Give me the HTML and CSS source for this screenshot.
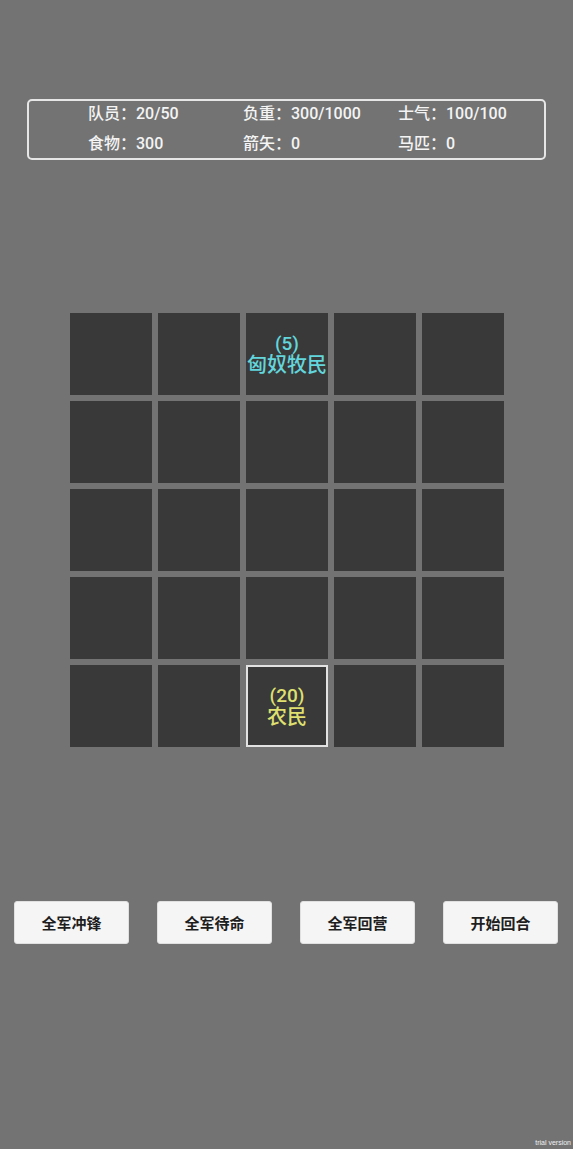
FILE: index.html
```html
<!DOCTYPE html>
<html lang="zh">
<head>
<meta charset="utf-8">
<link rel="stylesheet" href="styles.css">
</head>
<body>
<div class="page">
  <div class="stats">
    <div class="stat">队员：20/50</div>
    <div class="stat">负重：300/1000</div>
    <div class="stat">士气：100/100</div>
    <div class="stat">食物：300</div>
    <div class="stat">箭矢：0</div>
    <div class="stat">马匹：0</div>
  </div>

  <div class="board">
    <div class="cell"></div>
    <div class="cell"></div>
    <div class="cell enemy"><span class="num">(5)</span><span class="name">匈奴牧民</span></div>
    <div class="cell"></div>
    <div class="cell"></div>

    <div class="cell"></div>
    <div class="cell"></div>
    <div class="cell"></div>
    <div class="cell"></div>
    <div class="cell"></div>

    <div class="cell"></div>
    <div class="cell"></div>
    <div class="cell"></div>
    <div class="cell"></div>
    <div class="cell"></div>

    <div class="cell"></div>
    <div class="cell"></div>
    <div class="cell"></div>
    <div class="cell"></div>
    <div class="cell"></div>

    <div class="cell"></div>
    <div class="cell"></div>
    <div class="cell own selected"><span class="num">(20)</span><span class="name">农民</span></div>
    <div class="cell"></div>
    <div class="cell"></div>
  </div>

  <div class="actions">
    <button class="btn">全军冲锋</button>
    <button class="btn">全军待命</button>
    <button class="btn">全军回营</button>
    <button class="btn">开始回合</button>
  </div>

  <div class="trial">trial version</div>
</div>
</body>
</html>
```

FILE: styles.css
```css
* { box-sizing: border-box; }
html, body {
  margin: 0;
  padding: 0;
  background: #737373;
}
body {
  font-family: Roboto, "Noto Sans CJK SC", sans-serif;
}
.page {
  position: relative;
  width: 573px;
  height: 1149px;
  padding-top: 99px;
  overflow: hidden;
}
.stats {
  margin: 0 27px 0 27px;
  height: 61px;
  border: 2px solid #e6e6e6;
  border-radius: 5px;
  display: grid;
  grid-template-columns: 155px 155px 155px;
  grid-template-rows: 30px 30px;
  padding: 0 0 1px 59px;
  align-content: center;
  color: #f4f4f4;
  font-size: 16px;
  font-weight: 500;
}
.stat {
  line-height: 30px;
  white-space: nowrap;
}
.board {
  margin: 153px 0 0 70px;
  display: grid;
  grid-template-columns: repeat(5, 82px);
  grid-auto-rows: 82px;
  gap: 6px;
}
.cell {
  background: #393939;
  display: flex;
  flex-direction: column;
  align-items: center;
  justify-content: center;
  padding-top: 1px;
  font-size: 20px;
  font-weight: 500;
}
.num {
  display: block;
  height: 21px;
  line-height: 21px;
  font-size: 19px;
}
.name {
  display: block;
  height: 23px;
  line-height: 23px;
}
.enemy { color: #62d6dc; }
.own { color: #dfe070; }
.selected { border: 2px solid #e2e2e2; }
.actions {
  margin-top: 154px;
  padding: 0 15px 0 14px;
  display: flex;
  justify-content: space-between;
}
.btn {
  width: 115px;
  height: 43px;
  background: #f5f5f5;
  border: 1px solid #e0e0e0;
  border-radius: 3px;
  font-family: "Noto Sans CJK SC", sans-serif;
  font-size: 15px;
  font-weight: 700;
  color: #1e1e1e;
  padding: 0;
}
.trial {
  position: absolute;
  right: 2px;
  bottom: 3px;
  font-family: "Liberation Sans", sans-serif;
  font-size: 7px;
  color: #f0f0f0;
}
```
